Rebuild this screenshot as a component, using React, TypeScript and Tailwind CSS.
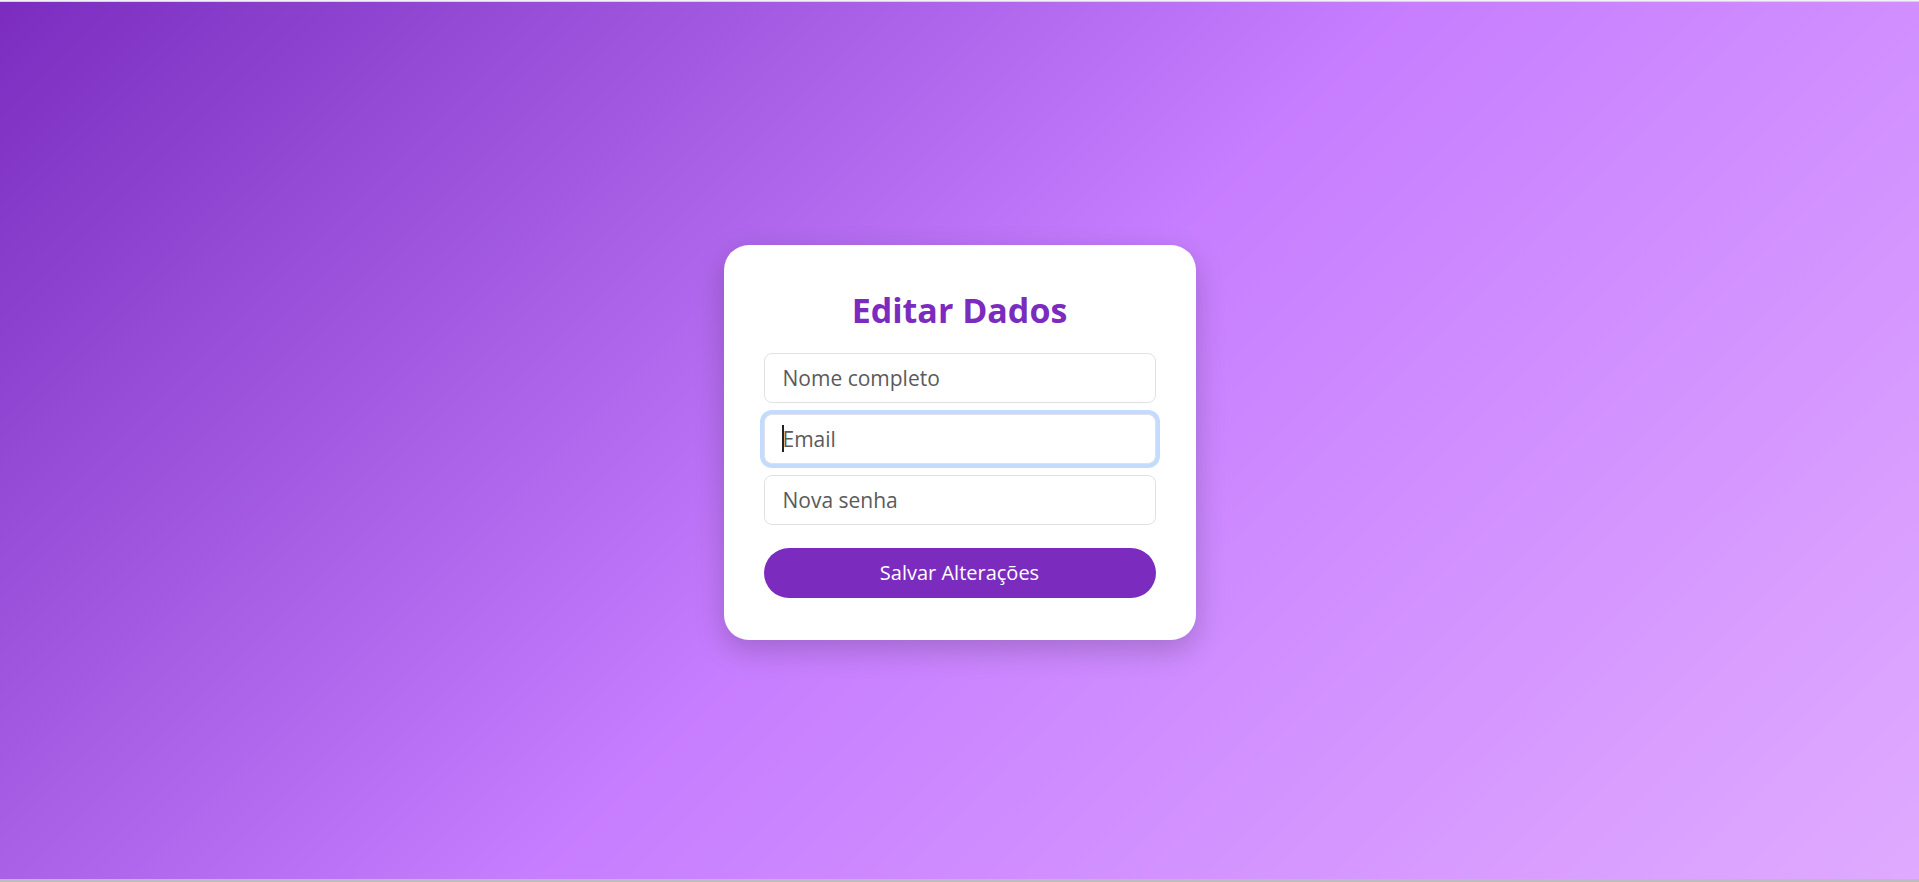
export default function App() {
  const inputBase =
    "h-[50px] w-full rounded-lg border border-[#dee2e6] bg-white px-[18px] text-[21px] text-[#212529] outline-none placeholder:text-[#5a5a5a]";

  return (
    <div className="flex h-screen flex-col font-['Open_Sans',sans-serif]">
      <div className="h-px bg-[#f2f2f2]" />
      <div className="h-px bg-[#d6d6d6]" />
      <main className="flex flex-1 items-center justify-center bg-linear-135 from-[#7b2cbf] via-[#c77dff] to-[#e0aaff] pt-[3px]">
        <div className="w-[472px] rounded-[25px] bg-white px-10 pb-[42px] pt-[41px] shadow-[0_10px_30px_rgba(0,0,0,0.2)]">
          <h2 className="mb-[19px] text-center text-[34px] font-bold leading-[48px] text-[#7b2cbf]">
            Editar Dados
          </h2>
          <form className="flex flex-col gap-[11px]" onSubmit={(e) => e.preventDefault()}>
            <input type="text" placeholder="Nome completo" className={inputBase} />
            <div className="relative">
              <input
                type="email"
                placeholder="Email"
                className={`${inputBase} border-[#86b7fe] caret-transparent shadow-[0_0_0_4px_rgba(13,110,253,0.25)]`}
              />
              {/* static caret */}
              <span className="absolute left-[18px] top-[11px] h-[27px] w-[2px] bg-[#222]" />
            </div>
            <input type="password" placeholder="Nova senha" className={inputBase} />
            <button
              type="submit"
              className="mt-3 h-[50px] w-full rounded-full bg-[#7b2cbf] text-[20px] text-white"
            >
              Salvar Alterações
            </button>
          </form>
        </div>
      </main>
      <div className="h-[3px] bg-[#bdbdbd]" />
    </div>
  );
}
